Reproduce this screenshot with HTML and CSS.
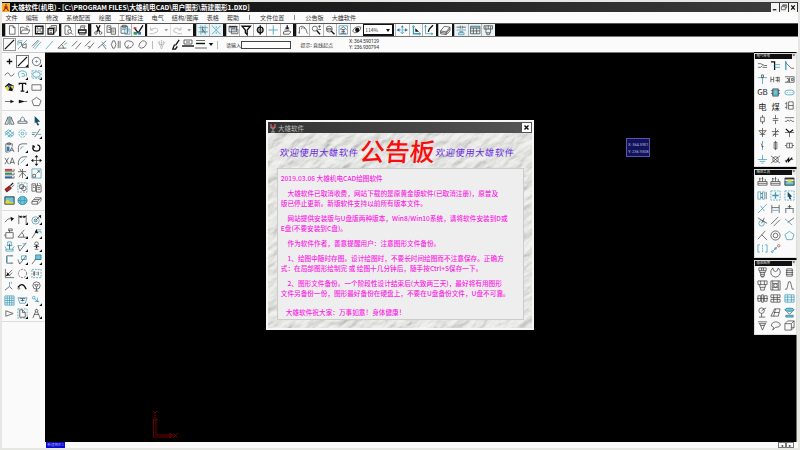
FILE: index.html
```html
<!DOCTYPE html>
<html lang="zh-CN">
<head>
<meta charset="utf-8">
<title>大雄软件(机电)</title>
<link rel="stylesheet" href="styles.css">
</head>
<body>
<div class="app">
<header class="titlebar">
<svg class="logo" viewBox="0 0 8 9"><path class="gold" d="M0 0h8v9H0z"/><path class="red" d="M4 1v3L1.500 8M4 4l2.500 4M2 4h4"/></svg>
<span>大雄软件(机电) - [C:\PROGRAM FILES\大雄机电CAD\用户图形\新建图形1.DXD]</span>
<div class="winbtns"><svg viewBox="0 0 9 9"><path class="w2" d="M2 7h4"/></svg><svg viewBox="0 0 9 9"><path d="M3 3V1.500h4.500V5H6M1.500 3.500H6V7H1.500zM3 2.200h4"/></svg><svg viewBox="0 0 9 9"><path class="w2" d="M2.500 2l4 5M6.500 2l-4 5"/></svg></div>
</header>
<nav class="menu"><span>文件</span><span>编辑</span><span>修改</span><span>系统配置</span><span>绘图</span><span>工程标注</span><span>电气</span><span>结构/图库</span><span>表格</span><span>帮助</span><i></i><span>文件位置</span><i></i><span>公告版</span><span>大雄软件</span></nav>
<div class="bar">
<div class="grp"><svg viewBox="0 0 12 12"><path d="M3 1.500h4l2 2v7H3zM7 1.500v2h2"/></svg><svg viewBox="0 0 12 12"><path d="M1 10V3h3l1 1h3v2M1 10l2-4h8l-2 4zM7 2q2-1 3 1"/></svg><svg viewBox="0 0 12 12"><path class="w2" d="M2 2h8v8H2z"/><path d="M4 2v3h4V2M4 10V7h4v3"/></svg><svg viewBox="0 0 12 12"><path class="w2" d="M1.500 4.500h6v6h-6z"/><path d="M3 4V3h6v6H8M5 2.500V1.200h5.500v6H9M3 6.500h3M3.500 10V8.500h2V10"/></svg></div>
<div class="grp"><svg viewBox="0 0 12 12"><path d="M7 10.500H2.500v-9h4l2 2v2M6.500 1.500v2h2"/><circle cx="7.500" cy="7.500" r="2"/><path d="M9 9l2 2"/></svg><svg viewBox="0 0 12 12"><path class="w2" d="M2 6h8v3H2z"/><path d="M3.500 5.500l1-4H9l-1 4M3 9v2h6V9M5 3h3"/></svg></div>
<div class="grp"><svg viewBox="0 0 12 12"><path class="w2" d="M4 1l3.500 7M8 1L4.500 8"/><circle cx="3.500" cy="9.200" r="1.400"/><circle cx="8.500" cy="9.200" r="1.400"/></svg><svg viewBox="0 0 12 12"><path d="M1.500 1.500h4v7h-4zM6 4h4.500v6.500H6zM3 3.500h2M3 5.500h2M7 6h2.500M7 8h2.500"/></svg><svg viewBox="0 0 12 12"><path d="M1.500 2h7v7.500h-7zM3 1h4v2H3z"/><path class="b" d="M5.500 5H11v5.500H5.500zM2.500 4h5M2.500 5.500h3M7 7h3"/></svg><svg viewBox="0 0 12 12"><path class="w2" d="M2 4l4 5 5-8"/><path class="fr" d="M1 3h3v2H1z"/><path class="fg" d="M1 8h4v3H1z"/><path class="fb" d="M6 8h3v3H6z"/></svg></div>
<div class="grp hist"><svg class="dim" viewBox="0 0 12 12"><path d="M2 3v3h3M2 6q6-4 8 0 0 3-4 3M1 10h5"/></svg><svg class="dim tiny" viewBox="0 0 8 12"><path class="f" d="M2.500 5h4l-2 2.500z"/></svg><svg class="dim" viewBox="0 0 12 12"><path d="M10 3v3H7M10 6Q4 2 2 6q0 3 4 3M6 10h5"/></svg><svg class="dim tiny" viewBox="0 0 8 12"><path class="f" d="M2.500 5h4l-2 2.500z"/></svg></div>
<div class="grp on"><svg viewBox="0 0 12 12"><path class="b" d="M3.500 1v10M8 1v10M1 3.500h10M1 8h10"/><path d="M5 5l3 4M5.500 2v7"/></svg><svg viewBox="0 0 12 12"><path class="b" d="M1.500 1.500l9 9M10.500 1.500l-9 9M6 2v2M6 8v2"/></svg></div>
<div class="grp"><svg viewBox="0 0 12 12"><path class="w2" d="M1.500 2.500h9"/><path d="M1.500 2h8v6h-8zM4 5h7v5H4zM3 4h5"/><path class="b" d="M5 7h5"/></svg><svg viewBox="0 0 12 12"><path class="w2" d="M1.500 2h9L7 6v5L5 9V6z"/></svg><svg viewBox="0 0 12 12"><circle class="w2" cx="6" cy="6" r="3"/><path class="w2" d="M6 1v10"/><path d="M2 6h8"/></svg><svg viewBox="0 0 12 12"><path class="b" d="M6 1v10M1 6h10"/></svg><svg viewBox="0 0 12 12"><path class="w2" d="M6 1v4M4 4h4"/><path d="M2 8l6-1 2 1-2 2.500H2zM3 6h5"/></svg></div>
<div class="grp"><svg viewBox="0 0 12 12"><path d="M2 10L1 8M2 9V5q-1-3 3-3 4 1 5 7l1 1M4 5l1-2M7 5V3"/></svg><svg viewBox="0 0 12 12"><circle cx="4.500" cy="4.500" r="2.700"/><path class="w2" d="M6.500 6.500L10 10.500"/><path d="M8 2h3M9.500 1v3M8 5.500h3"/></svg><svg viewBox="0 0 12 12"><circle cx="5" cy="5" r="3.200"/><path class="w2" d="M7 7l3.500 3.500"/><path d="M3 4.500h4v1.500H3z"/></svg><svg viewBox="0 0 12 12"><path class="b" d="M1.500 1.500h9v9h-9z"/><path d="M2.500 5.500L6 2.500l3.500 3M4 5.500h4M4 7.500h4M3 9.500h6M6 5.500v4"/></svg><svg viewBox="0 0 12 12"><path d="M1 7q3-6 9-4-1 6-7 6z"/><circle class="f" cx="6" cy="6" r="2.300"/></svg></div>
<div class="zoom">114%<svg viewBox="0 0 6 6"><path class="f" d="M1 2h4L3 5z"/></svg></div>
<div class="grp flat"><svg viewBox="0 0 12 12"><path class="b" d="M6 2v8M1 6h4M7 6h4M4 8l2 2 2-2"/><path class="fb" d="M0 6l3-2v4zM12 6L9 4v4zM6 1l1.500 2h-3z"/></svg><svg viewBox="0 0 12 12"><path class="b w2" d="M3 2v8h7"/><path class="f" d="M5 4l4 4H5z"/><path class="b" d="M1.500 3L3 1l1.500 2M9 8.500l2 1.500-2 1.500"/></svg><svg viewBox="0 0 12 12"><path class="b" d="M2 1v9h8M1 3l1-2 1 2M8 9l2 1-2 1"/><path class="w2" d="M5 8l1-3 4-4"/></svg></div>
<div class="grp"><svg viewBox="0 0 12 12"><path d="M1 7l4-5 6 1-4 5zM1 7v3l6 1 4-4V3M7 8v3M1 8.500l6 1 4-5"/></svg></div>
<div class="grp on"><svg viewBox="0 0 12 12"><path class="b" d="M1 6h10M3 9h6v2H3z"/><path d="M1 3h4M7 3h4M5 1.500v3M7 1.500v3M4 8h4"/></svg><svg viewBox="0 0 12 12"><path d="M1 2h10v8H1zM1 4h10M4 4v6M7.500 4v6M1 7h10"/><path class="b" d="M1 3h10"/></svg><svg viewBox="0 0 12 12"><path d="M1.500 1.500h9V5h-9zM3.500 5v4h5V5M4.500 9v2h3V9M6 1v4M3.500 2v3M8.500 2v3"/></svg></div>
</div>
<div class="bar2">
<svg viewBox="0 0 12 12"><path class="w2" d="M1 11L11 1"/></svg><svg viewBox="0 0 12 12"><path class="b" d="M1 2h5M1 2v5M1 11L11 1"/><path d="M6 7l4-2v5L6 9zM2 4h3v3"/></svg><svg viewBox="0 0 12 12"><path class="b" d="M2 10l7-8M4 11l7-8"/><path d="M1 8l7-7"/></svg><svg viewBox="0 0 12 12"><path class="b" d="M2 11l8-9"/></svg><svg viewBox="0 0 12 12"><path d="M10 10H1L9 2M5 6q2 1 2 4"/><path class="b" d="M8 6l3-2"/></svg><svg viewBox="0 0 12 12"><path d="M1 8l6-6M5 11l6-7"/></svg><svg viewBox="0 0 12 12"><path d="M1 8l6-6M5 11l6-7M4 8l3 1"/></svg><svg viewBox="0 0 12 12"><path d="M1 10l9-8M6 6l4 5"/><path class="b" d="M5 3l5 5"/></svg><svg viewBox="0 0 12 12"><path d="M3 2Q0 6 3 10M5 2q3 4 0 8M9 2v8M11 2v8M3 2h2M3 10h2"/></svg><svg viewBox="0 0 12 12"><path d="M3 10L1 7q-1-5 4-5 6 1 5 4-1 4-7 4zM3 10l2-3"/></svg><svg viewBox="0 0 12 12"><path d="M2 8q0-4 4-6 5 0 4 4-2 4-5 4-2 0-3-2z"/></svg>
<i class="sep"></i>
<svg class="dim" viewBox="0 0 12 12"><path d="M4 2v4l2 5 2-5V2M2 3l2 3h4l2-3M6 1v7"/></svg><svg viewBox="0 0 12 12"><path class="w2" d="M10 1L6 7M5 6L3 11h3l2-3"/></svg>
<div class="styles"><svg viewBox="0 0 12 12"><path d="M2 1h8v4H2zM4 3h4"/><path class="w2" d="M0 7h12"/></svg><svg viewBox="0 0 12 12"><path d="M1 1.500h9M0 9h12"/><path class="w2" d="M1 4.500h9"/></svg></div>
<svg class="tiny" viewBox="0 0 8 12"><path class="f" d="M1 4h6L4 8z"/></svg>
<i class="sep"></i><label>请输入:</label><b class="field"></b><span class="hint">提示: 直线起点</span><div class="xy"><div>X: 364.590129</div><div>Y: 236.930794</div></div>
</div>
<main class="work">
<aside class="left">
<div class="tools"><svg viewBox="0 0 12 12"><path class="w2" d="M6 3v6M3 6h6"/></svg><svg class="sel more" viewBox="0 0 12 12"><path class="w2" d="M1 11L11 1"/><path class="f" d="M12 9v3H9z"/></svg><svg viewBox="0 0 12 12"><circle cx="6" cy="6" r="4.500"/><path class="b" d="M4.500 6h3M6 4.500v3"/><path class="f" d="M12 9v3H9z"/></svg>
<svg viewBox="0 0 12 12"><path d="M1 7q3-5 5-1t5-1"/></svg><svg viewBox="0 0 12 12"><path class="b" d="M3 10q-4-7 2-8 7 0 5 6M5 5q4-1 3 3L5 8"/><path class="f" d="M12 9v3H9z"/></svg><svg viewBox="0 0 12 12"><ellipse class="b" cx="6" cy="6" rx="4" ry="3"/><path class="b dash" d="M1 2h10v8H1z"/><path class="f" d="M12 9v3H9z"/></svg>
<svg viewBox="0 0 12 12"><path class="f" d="M1 5l4-4 6 3-2 6-5-1z"/><path class="fy" d="M1 6l3 4 2-3-2-3zM7 4h4l-2 4z"/><path class="fb" d="M4 3l2 4 2-3z"/></svg><svg viewBox="0 0 12 12"><path class="w2" d="M2.500 3V1.500h7V3M6 2v8M4 10h4"/><path class="f" d="M12 9v3H9z"/></svg><svg viewBox="0 0 12 12"><path d="M1 3h10v6H1z"/></svg>
<svg viewBox="0 0 12 12"><path d="M1 6h9"/><path class="f" d="M7 4l4 2-4 2z"/></svg><svg viewBox="0 0 12 12"><path class="f" d="M2 4l7 2-7 2z"/><path d="M8 6h3"/></svg><svg viewBox="0 0 12 12"><path d="M6 1.500l5 3.500-2 5.500H3L1 5z"/></svg></div>
<div class="tools t2"><svg viewBox="0 0 12 12"><path d="M4.500 2v8H1zM7.500 2v8H11z"/><path class="b" d="M6 1v10"/></svg><svg viewBox="0 0 12 12"><path d="M1 9V7l3-1V4l2-2 2 2v2l3 1v2z"/><path class="b" d="M2 7h8"/></svg><svg viewBox="0 0 12 12"><path class="navy" d="M4 1l6 6-3 .5L9 11l-2 .5L5.500 8 4 9z"/></svg>
<svg viewBox="0 0 12 12"><path class="b" d="M1 5l4-3 6 5-4 3zM3 4l6 5M1 8l7-6M4 10l7-6"/></svg><svg viewBox="0 0 12 12"><circle class="b dash" cx="6" cy="6" r="4"/><circle class="b" cx="6" cy="6" r="1.500"/></svg><svg viewBox="0 0 12 12"><path class="b" d="M1 5h5M7 7h4"/><path d="M1 7h3M4 10l6-9"/><path class="f" d="M12 9v3H9z"/></svg>
<svg viewBox="0 0 12 12"><path d="M2 2h7v3M2 2v9h3M4 1h3v2H4zM6 11l2.500-5L11 11M7 9h3"/><path class="fb" d="M3 5h3v5H3z"/></svg><svg viewBox="0 0 12 12"><path d="M1.500 11V6q0-4 4-4H11"/><path class="b" d="M4 8q0-3 3-3"/><path class="f" d="M12 9v3H9z"/></svg><svg viewBox="0 0 12 12"><path class="w2" d="M3 4q-2 3 0 5 3 2 6 0 1.500-3 0-5L7 3M3 4L1.500 4.500M3 4l1 2"/></svg>
<svg viewBox="0 0 12 12"><path d="M1 3l4 7M5 3l-4 7M6.500 10L9 3l2.500 7M7 8h4"/></svg><svg viewBox="0 0 12 12"><path d="M1.500 11V8q1-6 6-6H11"/><path class="b" d="M4 9l5-5"/><path class="f" d="M12 9v3H9z"/></svg><svg viewBox="0 0 12 12"><path d="M6 2v8M2 6h8"/><path class="f" d="M6 0l2 2.500H4zM6 12l2-2.500H4zM0 6l2.500 2V4zM12 6L9.500 4v4z"/></svg>
<svg viewBox="0 0 12 12"><path class="fr" d="M1 1h8v2H1z"/><path class="fg" d="M1 5h8v2H1z"/><path class="fb" d="M1 9h8v2H1z"/><path d="M1 3.500h10V1M1 7.500h10V5M1 11h10V9"/></svg><svg viewBox="0 0 12 12"><path d="M1 4h9M6 1v10M6 5l-4 5M6 5l4 4M3 1l2 3"/><path class="f" d="M12 9v3H9z"/></svg><svg viewBox="0 0 12 12"><path class="b" d="M1 1h10v10H1z"/><path d="M2 10V7h3v3zM6 6l3-3M7 3h2v2"/></svg>
<svg viewBox="0 0 12 12"><path class="rd" d="M1 8l5-4 2 3-5 4z"/><path class="w2" d="M7 4l3-3"/><path d="M8 6l3-3"/></svg><svg viewBox="0 0 12 12"><path class="b dash" d="M1 1h10v10H1z"/><path d="M3 3h4v4H3z"/><circle cx="7.500" cy="7" r="2.500"/></svg><svg viewBox="0 0 12 12"><path d="M1 2h4v8H1zM6 4h5v7H6zM7 1v3M9 1l2 2M7 6h3M7 8h3M2 4h2M2 6h2"/></svg>
<svg viewBox="0 0 12 12"><path class="cy" d="M1 2h10v8H1z"/><path class="fy" d="M1 7l3-2 3 3h4v2H1z"/><path d="M1 2h10v8H1z"/></svg><svg viewBox="0 0 12 12"><ellipse class="cy" cx="6" cy="6" rx="5" ry="4.500"/><path class="b" d="M4 2v8M8 2v8M1 6h10"/></svg><svg viewBox="0 0 12 12"><path d="M1 7l4-4h6L7 7zM1 7v3h6V7M7 10l4-4V3M3 5h6"/></svg></div>
<div class="tools t3"><svg viewBox="0 0 12 12"><path d="M1 9q3-5 7-4"/><path class="f" d="M7 3l4 2-3 3z"/></svg><svg viewBox="0 0 12 12"><path d="M2 1v10M10 1v10M2 3h8"/><path class="f" d="M2 3l3-1.500v3zM10 3L7 1.500v3zM12 9v3H9z"/></svg><svg viewBox="0 0 12 12"><circle class="b" cx="5" cy="7" r="4"/><circle cx="5" cy="7" r="1.500"/><path d="M5 7l5-5"/><path class="f" d="M11 1v4L8 2zM12 9v3H9z"/></svg>
<svg viewBox="0 0 12 12"><path d="M2 5h8v6H2zM6 5V2M5 1h4v2H5zM1 7v2"/></svg><svg viewBox="0 0 12 12"><path d="M1 10h10M1 10l7-8M5 5q3 2 2 5"/><path class="f" d="M12 9v3H9z"/></svg><svg viewBox="0 0 12 12"><path d="M1 11l4-6h3"/><path class="b" d="M6 2h5M8 4h3v2"/><path class="f" d="M6 1l2 5-4-1zM12 9v3H9z"/></svg>
<svg viewBox="0 0 12 12"><path class="b" d="M4 1h4v4H4zM3 5h6M2 9h8v2H2zM1 6l2 3M11 6L9 9"/><path d="M6 3v6"/></svg><svg viewBox="0 0 12 12"><path d="M1 5l2 6 7-9"/><path class="b" d="M1 5h4M6 3h3"/><path class="f" d="M12 9v3H9z"/></svg><svg viewBox="0 0 12 12"><circle cx="6" cy="3" r="2"/><path class="w2" d="M6 4v4"/><path d="M3 6h6M4 9h4"/><path class="f" d="M12 9v3H9z"/></svg>
<svg viewBox="0 0 12 12"><path d="M10 2H3v8h7"/><path class="b w2" d="M3 3v6"/><path class="b" d="M8 1v2M8 9v2"/></svg><svg viewBox="0 0 12 12"><path d="M1 6l2 5 7-9M5 6h3"/><path class="b" d="M5 2h5v4H5z"/><path class="f" d="M12 9v3H9z"/></svg><svg viewBox="0 0 12 12"><path d="M1 11l4-5M4 6h7"/><path class="cy" d="M5 1h6v5H5z"/><path class="f" d="M12 9v3H9z"/></svg>
<svg viewBox="0 0 12 12"><path d="M1.500 1v9.500H11M3 8l6-6M6 8l3-3M3 5l4 4"/><path class="f" d="M2 9l2-4 2 3z"/></svg><svg viewBox="0 0 12 12"><circle class="dash" cx="6" cy="6" r="4.500"/><path class="f" d="M12 9v3H9z"/></svg><svg viewBox="0 0 12 12"><path class="b dash" d="M1 1.500h10v9H1z"/><path d="M3 4v4h1V4zM6 5h1M6 7h1M8 4v4"/></svg>
<svg viewBox="0 0 12 12"><path d="M1 10l5-4 3 3"/><path class="b" d="M6 1v5M8 1v2"/></svg><svg viewBox="0 0 12 12"><path class="w2" d="M1 7q5-7 9 2"/><circle cx="2" cy="8" r="1"/></svg><svg viewBox="0 0 12 12"><circle cx="6" cy="5" r="4"/><path d="M4 4h4L6 7zM6 7v4M4 11h4"/></svg>
<svg viewBox="0 0 12 12"><path class="b" d="M1 1h10v10H1zM1 3.500h10M1 6h10M1 8.500h10M3.500 1v10M6 1v10M8.500 1v10"/></svg><svg viewBox="0 0 12 12"><path class="b" d="M1 3h10L9 9H3z"/><path d="M3 4h6M4 6h4M6 4v3"/><path class="f" d="M12 9v3H9z"/></svg><svg viewBox="0 0 12 12"><circle class="b" cx="3" cy="3" r="1.500"/><path class="b" d="M4 4l4 4M7 3v4M4 7h5"/><path class="f" d="M12 9v3H9z"/></svg>
<svg viewBox="0 0 12 12"><path d="M2 3l8 3-8 3z"/></svg><svg viewBox="0 0 12 12"><path class="b dash" d="M1 1h10v10H1z"/><path d="M3 2h3l3 3v5H3zM6 2v3h3"/><path class="f" d="M12 9v3H9z"/></svg><svg viewBox="0 0 12 12"><circle cx="6" cy="3" r="1.500"/><path d="M5 4L2 11M7 4l3 7M3.500 7h5M6 1v1"/><path class="f" d="M12 9v3H9z"/></svg></div>
</aside>
<section class="canvas">
<div class="coord"><div>X: 364.5901</div><div>Y: 236.9308</div></div>
<svg class="ucs" viewBox="0 0 30 30"><path d="M4 1l2 2 2-2M6 3v3M4.500 27V9M7 25V9M4 10h4L6 7zM4.500 27H22M7 25h15M21 23.500v4l3-2zM24 23l5 5M29 23l-5 5"/></svg>
<section class="dialog">
<svg class="marble" viewBox="0 0 264 196" preserveAspectRatio="none"><filter id="m" x="0" y="0" width="1" height="1"><feTurbulence type="fractalNoise" baseFrequency="0.05 0.1" numOctaves="4" seed="8"/><feDiffuseLighting surfaceScale="2.100" diffuseConstant="1" lighting-color="#f3f4f2"><feDistantLight azimuth="110" elevation="60"/></feDiffuseLighting></filter><g transform="rotate(-38 132 98)"><rect x="-80" y="-100" width="430" height="400" filter="url(#m)"/></g></svg>
<header><svg viewBox="0 0 8 10"><path class="rd" d="M2 2h4v3H2z"/><path class="pale" d="M4 5v4M2 9h4M2 1v4h4V1"/></svg>大雄软件<svg class="x" viewBox="0 0 9 9"><path class="w2" d="M2.500 2.500l4 4M6.500 2.500l-4 4"/></svg></header>
<div class="banner"><span>欢迎使用大雄软件</span><strong>公告板</strong><span>欢迎使用大雄软件</span></div>
<article>
<p>2019.03.06 大雄机电CAD绘图软件</p>
<p class="in">大雄软件已取消收费，网站下载的是原黄金版软件(已取消注册)，原普及<br>版已停止更新。新版软件支持以前所有版本文件。</p>
<p class="in">网站提供安装版与U盘版两种版本，Win8/Win10系统，请将软件安装到D或<br>E盘(不要安装到C盘)。</p>
<p class="in">作为软件作者，善意提醒用户：注意图形文件备份。</p>
<p class="in">1、绘图中随时存图。设计绘图时，不要长时间绘图而不注意保存。正确方<br>式：在局部图形绘制完 或 绘图十几分钟后，随手按Ctrl+S保存一下。</p>
<p class="in">2、图形文件备份。一个阶段性设计结束后(大致两三天)，最好将有用图形<br>文件另备份一份，图形最好备份在硬盘上，不要在U盘备份文件，U盘不可靠。</p>
<p class="wish">大雄软件祝大家：万事如意！身体健康！</p>
</article>
</section>
</section>
<aside class="right">
<section class="panel"><h2>电气符号<b>×</b></h2><div class="tools"><svg viewBox="0 0 12 12"><path d="M1 4h3l4 2h3M1 8h3l2-2M6 8h5"/></svg><svg viewBox="0 0 12 12"><path class="w2" d="M1 2h4v9"/><path class="b" d="M5 5h6M5 8h6"/></svg><svg viewBox="0 0 12 12"><path class="b w2" d="M2 1v10"/><path d="M2 3l6 6h3"/></svg>
<svg viewBox="0 0 12 12"><path class="b" d="M1 4h10M6 4v7"/><path d="M5 1h2v3H5z"/></svg><svg viewBox="0 0 12 12"><path d="M1 3v6M1 6h3V3M4 6v3M6 4h4M6 7h4M8 3v6M10 3v6"/></svg><svg viewBox="0 0 12 12"><path d="M1 3h10v6H1M3 5h2v3H3M6 4v5M8 5h2v2H8z"/></svg>
<span class="tx gb">GB</span><svg viewBox="0 0 12 12"><path class="cy" d="M3 3h6v6H3z"/><path d="M3 2h6v8H3zM1 4h2M1 7h2M9 4h2M9 7h2"/></svg><svg viewBox="0 0 12 12"><rect class="b" x="1" y="3.500" width="10" height="5" rx="2.500"/><path class="b" d="M3 6h1M6 6h1M8.500 6h1"/></svg>
<span class="tx">电</span><span class="tx">煤</span><svg viewBox="0 0 12 12"><path d="M3 2v8M5 2h5v8H5zM5 6h5M1 4h2M1 8h2"/></svg>
<svg viewBox="0 0 12 12"><path d="M4 3.500h4v5H4zM6 1v2.500M6 8.500V11"/></svg><svg viewBox="0 0 12 12"><path d="M6 1v4M6 7v4M3 5h6M3 7h6"/></svg><svg viewBox="0 0 12 12"><path d="M1 4h10M1 8h2q1-3 3 0 1-3 3 0h2"/></svg>
<svg viewBox="0 0 12 12"><path d="M6 1v10M2 4h8L6 8zM3 8h6"/></svg><svg viewBox="0 0 12 12"><path d="M6 1v10M2 5h8M3 8h6M3 10l6-7"/></svg><svg viewBox="0 0 12 12"><path class="w2" d="M2 2l4 4 4-3"/><path d="M1 6h10M6 6v5"/></svg>
<svg viewBox="0 0 12 12"><path class="b" d="M6 1v4M6 7v4"/><path d="M6 7L4.500 4"/><circle cx="6" cy="7" r=".6"/></svg><svg viewBox="0 0 12 12"><path d="M4.500 2.500h3v7h-3zM6 1v10"/></svg><svg viewBox="0 0 12 12"><path d="M3 3.500h6v5H3zM6 3.500v5M1 6h2M9 6h2"/></svg>
<svg viewBox="0 0 12 12"><path class="b" d="M6 1v5M1 6h10M3 8h6M5 10h2"/></svg><svg viewBox="0 0 12 12"><circle cx="6" cy="6" r="3"/><path d="M1 2l10 8M11 2L1 10"/></svg><svg viewBox="0 0 12 12"><path class="w2" d="M2 9l3-4v3l4-4"/><path d="M1 7h3M7 6h3"/></svg></div></section>
<section class="panel p2"><h2>捕捉工具<b>×</b></h2><div class="tools"><svg viewBox="0 0 12 12"><path d="M1 6h10v4H1zM3 6V2M6 6V1M9 6V3M1 8h10M2 3h2M5 3h2"/></svg><svg viewBox="0 0 12 12"><path d="M1 6h10v4H1zM3 6V2M6 6V1M9 6V3M1 8h10M2 3h2M5 3h2"/></svg><svg viewBox="0 0 12 12"><path class="w2" d="M1 3h10"/><path class="cy" d="M1 6h10v4H1z"/><path class="fy" d="M4 4h4v3H4z"/><path d="M1 2h10v8H1z"/></svg>
<svg viewBox="0 0 12 12"><path class="b" d="M1 2h3v8H1zM6 2h2v8H6z"/><path d="M10 2v8M4 4h2M4 8h2"/></svg><svg viewBox="0 0 12 12"><path class="b dash" d="M1 1h10v10H1z"/><path class="w2 b" d="M6 2.500v7M2.500 6h7"/></svg><svg viewBox="0 0 12 12"><path class="b dash" d="M1 1h10v10H1z"/><path class="navy" d="M4 2l5 5-2 .3L8 10H6L5 7 4 8z"/></svg>
<svg viewBox="0 0 12 12"><path class="b" d="M1 11L11 1M4 3l4 6"/></svg><svg viewBox="0 0 12 12"><path d="M2 2v9M10 2v9M2 5h8"/><path class="b" d="M3 8h6"/></svg><svg viewBox="0 0 12 12"><path d="M2 11V6h8v5M4 4h4M6 2v4"/><path class="b" d="M1 6h2M9 6h2"/></svg>
<svg viewBox="0 0 12 12"><circle class="b" cx="5" cy="8" r="3"/><path d="M1 2l10 6M5 8l3-6"/></svg><svg viewBox="0 0 12 12"><path d="M1 9l8-8M4 11l7-7"/></svg><svg viewBox="0 0 12 12"><path class="b" d="M1 3l8 7"/><path d="M4 7l7-5"/></svg>
<svg viewBox="0 0 12 12"><path d="M1 10L9 1M5 5l6 6"/></svg><svg viewBox="0 0 12 12"><circle cx="6" cy="6" r="5"/><circle cx="6" cy="6" r="2.500"/></svg><svg viewBox="0 0 12 12"><path class="b" d="M6 1.500l5 3.500-2 5.500H3L1 5z"/></svg>
<svg viewBox="0 0 12 12"><path class="b" d="M3 2H1v8h2M9 2h2v8H9M6 2v2M6 5v2M6 8v2"/></svg><svg viewBox="0 0 12 12"><path class="b" d="M3 9l5-5"/><circle class="b" cx="2.500" cy="9.500" r="1"/><circle class="rdot" cx="9.500" cy="3" r="1.300"/><circle class="b" cx="6" cy="6" r="1"/></svg></div></section>
<section class="panel p3"><h2>结构图库<b>×</b></h2><div class="tools"><svg viewBox="0 0 12 12"><path d="M2 1h8v3H2zM3 4v2h6V4M4 6v4h4V6M4 8h4M5 10v1h2v-1M5 1v3M7 1v3"/></svg><svg viewBox="0 0 12 12"><path d="M3 1L1 4q-1 6 5 7 6-1 5-7L9 1 8 4 6 5 4 4z"/></svg><svg viewBox="0 0 12 12"><path d="M3 2h6v8H3zM2 4h8M2 6h8M2 8h8"/></svg>
<svg viewBox="0 0 12 12"><path d="M1 1h10v4H1zM3 5v3h6V5M4 8v3h4V8M4 1v4M8 1v4"/></svg><svg viewBox="0 0 12 12"><path d="M1 1h10v10H1zM3 1v10M9 1v10M3 4h6M3 8h6"/><circle cx="6" cy="6" r="2"/></svg><svg viewBox="0 0 12 12"><path d="M1 10h2l2-8h2l2 8h2"/></svg>
<svg viewBox="0 0 12 12"><path d="M1 3h3v6H1zM5 2h2v8H5zM8 3h3v6H8zM0 6h12"/></svg><svg viewBox="0 0 12 12"><path d="M1 2h10v3H1zM1 7h10v3H1zM4 2v8M8 2v8"/></svg><svg viewBox="0 0 12 12"><path class="b" d="M1 2h10v8H1zM1 4.500h10M1 7.500h10M4 2v8M8 2v8"/></svg>
<svg viewBox="0 0 12 12"><circle cx="5" cy="4" r="3"/><path d="M5 4l5-3M5 7v4M2 11h7"/></svg><svg viewBox="0 0 12 12"><path d="M1 10h8l2-8H5zM4 6h6M6 2L4 10"/></svg><svg viewBox="0 0 12 12"><ellipse class="cy" cx="6" cy="3" rx="5" ry="1.800"/><path class="cy" d="M2 9h8v2H2z"/><path d="M3 5l3 3 3-3"/></svg>
<svg viewBox="0 0 12 12"><path d="M1 2h10M2 4h8M3 4l3 7 3-7M4 6h4"/></svg><svg viewBox="0 0 12 12"><path d="M4 8q-4-1-2-4 4-4 9 0 1 4-5 4l-3 3z"/></svg><svg viewBox="0 0 12 12"><path d="M1 4h7v7H1zM4 1h7v7H8M1 4l3-3M8 4l3-3M8 11l3-3"/></svg></div></section>
</aside>
</main>
<footer class="status"><span>新建图形1</span><div><b>◂</b><b>▸</b></div></footer>
</div>
</body>
</html>
```
FILE: styles.css
```css
* { box-sizing: border-box; }
body {
  margin: 0;
  width: 800px;
  height: 450px;
  overflow: hidden;
  background: #e6e7e3;
  color: #333;
  font: 6.1px "Noto Sans CJK SC", sans-serif;
}
svg { fill: none; stroke: #444; stroke-width: .8; flex: none; display: block; }
.w2 { stroke: #111; stroke-width: 1.4; }
.b { stroke: #3a9ab8; }
.dash { stroke-dasharray: 2 1.2; }
.f { fill: #111; stroke: none; }
.fr { fill: #d33; stroke: none; }
.fg { fill: #2c9a60; stroke: none; }
.fb { fill: #3478b8; stroke: none; }
.fy { fill: #e6d83a; stroke: none; }
.cy { fill: #6cc4d6; stroke: #287f9a; }
.rd { fill: #a22; stroke: #511; }
.rdot { stroke: #d33; }
.navy { fill: #14506e; stroke: none; }
.dim { opacity: .4; }
.app { padding: 2px 2px 0; height: 450px; display: flex; flex-direction: column; }

.titlebar {
  height: 10px;
  display: flex;
  align-items: center;
  background: linear-gradient(90deg, #080808, #3c3c3c);
  color: #fff;
  font-size: 6.67px;
  font-weight: 700;
  line-height: 10px;
  white-space: nowrap;
  flex: none;
}
.logo { width: 8px; height: 9px; margin-right: 1.5px; }
.gold { fill: #f5b32c; stroke: none; }
.red { stroke: #a21; stroke-width: 1.2; }
.winbtns { margin-left: auto; display: flex; }
.winbtns svg { width: 9px; height: 9px; background: #f4f4f4; border-right: .5px solid #333; }

.menu {
  height: 11px;
  flex: none;
  display: flex;
  align-items: center;
  gap: 8.1px;
  padding-left: 3.5px;
  background: #fbfbfb;
  line-height: 11px;
  white-space: nowrap;
}
.menu i { width: 1px; height: 5px; background: #888; margin: 0 2.3px 0 1.4px; }

.bar { height: 14px; flex: none; display: flex; background: #000; border-top: 1px solid #555; border-bottom: 1px solid #777; }
.grp { display: flex; background: #fbfbfb; }
.grp::before { content: ""; width: 2.6px; background: #111; }
.bar .grp > svg { width: 13.5px; height: 12px; border-left: 1px solid #b5b5b5; padding: .4px; }
.bar .on > svg { background: #e9f3f6; }
.bar .grp > svg.tiny { width: 9.5px; border: 0; }
.bar .flat { padding-left: 1px; }
.bar .flat::before { display: none; }
.zoom {
  width: 31px;
  display: flex;
  align-items: center;
  justify-content: space-between;
  background: #fff;
  border: 2px solid #111;
  border-left-width: 1px;
  border-top-width: 1px;
  font-size: 5px;
  padding: 0 1px;
}
.zoom svg { width: 6px; }

.bar2 { height: 15px; flex: none; display: flex; align-items: center; background: #fbfbfb; padding-left: 1px; white-space: nowrap; }
.bar2 > svg { width: 11px; height: 11px; margin: 0 1.15px; }
.bar2 > svg:first-child { outline: .7px solid #999; }
.bar2 > svg.tiny { width: 6px; }
.styles { display: flex; gap: 1px; }
.styles svg { width: 12px; height: 12px; }
.sep { width: 1px; height: 8px; background: #bbb; margin: 0 2.5px; }
.bar2 label { font-size: 5px; margin: 0 1px 0 5px; width: 14.5px; }
.field { width: 50px; height: 8px; border: 1px solid #444; background: #fff; }
.hint { font-size: 5px; width: 49px; padding-left: 9px; }
.xy { font: 5px/5.9px Roboto, sans-serif; letter-spacing: -.17px; margin-left: 8.5px; }

.work { height: 390px; flex: none; display: grid; grid-template-columns: 43px 709px 43px; background: linear-gradient(90deg, #000 794px, #e6e7e3 795px); }
.left { background: #fafafa; height: 396px; border-top: 1px solid #ccc; position: relative; }
.tools { display: grid; grid-template-columns: repeat(3, 13.4px); grid-auto-rows: 13.35px; align-items: center; justify-items: center; }
.tools svg { width: 11px; height: 11px; }
.left .tools { padding: 1.5px 0 2.5px .7px; border-bottom: 1px solid #ddd; }
.left .t2, .left .t3 { padding-top: 2.5px; }
.left .t3 { padding-bottom: 1px; }
.sel { outline: .7px solid #777; background: #fff; }
.tx { font-size: 8.3px; line-height: 12px; color: #222; }
.gb { font-size: 7.8px; }

.canvas { border-top: 1px solid #777; position: relative; background: #000; }
.coord {
  position: absolute;
  left: 581px;
  top: 85px;
  width: 24px;
  height: 19px;
  padding: 1.5px 0 0 1px;
  background: #12125a;
  border: 1px solid #5656b0;
  color: #b4b4dc;
  font: 4.1px/7px Roboto, sans-serif;
  letter-spacing: -.12px;
  white-space: nowrap;
}
.ucs { position: absolute; left: 104px; top: 357px; width: 30px; height: 30px; stroke: #800; stroke-width: .8; }

.dialog { position: absolute; left: 221px; top: 67px; width: 268px; height: 210px; border: 2px solid #f6f6f4; background: #ccc; }
.dialog header {
  position: relative;
  height: 11px;
  display: flex;
  align-items: center;
  background: linear-gradient(90deg, #333, #555);
  color: #bbb;
  font-size: 6.5px;
}
.dialog header svg { width: 8px; height: 10px; margin: 0 1px; }
.dialog header .x { width: 9px; height: 9px; margin-left: auto; background: #fff; }
.pale { stroke: #bbb; }
.marble { position: absolute; left: 0; top: 11px; width: 264px; height: 195px; overflow: hidden; }
.banner { position: relative; display: flex; justify-content: center; align-items: center; height: 35px; padding: 0 5px 0 0; white-space: nowrap; }
.banner span { color: #6a2be0; font-size: 9.2px; letter-spacing: .65px; padding-top: 2px; transform: skewX(-7deg); }
.banner strong { color: #fa0c0c; font-size: 25px; line-height: 35px; font-weight: 500; margin: 0 1px; transform: skewX(-5deg); }
article {
  position: relative;
  width: 247px;
  height: 152px;
  margin-left: 9px;
  padding: 4px 0 0 2.8px;
  border: 1px solid #ccc;
  background: #eee;
  color: #fa1ee4;
  font-size: 6.65px;
  font-weight: 500;
  line-height: 10.5px;
  white-space: nowrap;
}
article p { margin: 0 0 4.15px; }
article .in { text-indent: 6.7px; }
article .wish { margin-top: 8.3px; padding-left: 5px; }

.panel { background: #fafafa; border: 1px solid #ddd; border-width: 1px .5px; height: 114px; margin-top: 1px; overflow: hidden; }
.p2 { height: 89px; margin-top: 2px; }
.p3 { height: 75px; margin-top: 1.5px; }
.panel h2 { margin: 0; height: 5px; background: #111; color: #aaa; font-size: 3.4px; line-height: 4.5px; display: flex; justify-content: space-between; padding-left: 1.5px; }
.panel h2 b { width: 4.5px; background: #eee; color: #111; text-align: center; }
.panel .tools { padding: 0 0 0 .7px; }

.status { height: 6px; flex: none; display: flex; justify-content: space-between; align-items: flex-start; margin-left: 43px; background: #fafafa; position: relative; }
.status span { width: 19px; height: 6px; margin-left: 1px; background: #0808d8; color: #aac; font-size: 3.6px; line-height: 5.5px; text-align: center; }
.status div { display: flex; margin-right: 4px; }
.status b { width: 8px; height: 6px; border: .7px solid #777; font-size: 4px; line-height: 5px; text-align: center; }
```
